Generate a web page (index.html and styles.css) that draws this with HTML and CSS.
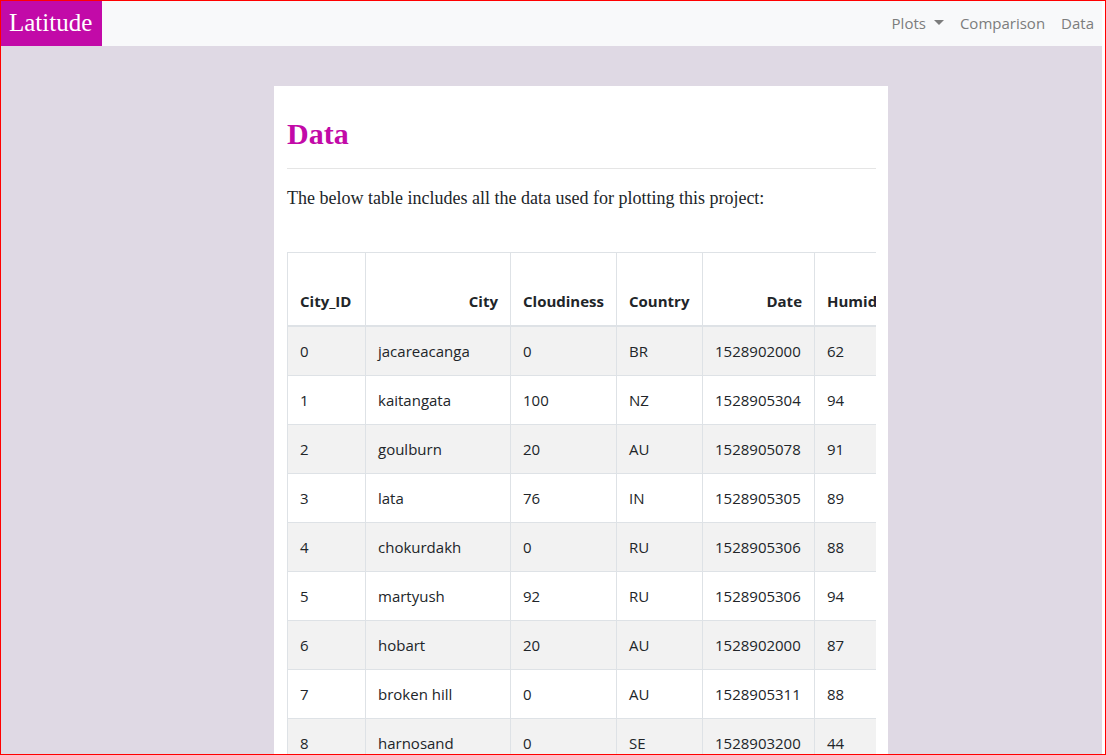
FILE: index.html
```html
<!DOCTYPE html>
<html lang="en">
<head>
<meta charset="utf-8">
<meta name="viewport" content="width=device-width, initial-scale=1">
<title>Latitude - Data</title>
<link rel="stylesheet" href="styles.css">
</head>
<body>
<div class="frame">
  <div class="page">
    <header class="navbar">
      <a class="brand" href="#">Latitude</a>
      <nav class="nav">
        <button class="nav-link nav-toggle" type="button" aria-haspopup="true">Plots<span class="caret"></span></button>
        <a class="nav-link" href="#">Comparison</a>
        <a class="nav-link" href="#">Data</a>
      </nav>
    </header>
    <main class="content">
      <section class="card">
        <h1 class="title">Data</h1>
        <hr class="rule">
        <p class="intro">The below table includes all the data used for plotting this project:</p>
        <div class="table-scroll">
          <table class="table">
            <colgroup><col class="col-id"><col class="col-city"><col class="col-cloud"><col class="col-country"><col class="col-date"><col class="col-humidity"></colgroup>
            <thead>
              <tr><th>City_ID</th><th class="right">City</th><th>Cloudiness</th><th>Country</th><th class="right">Date</th><th>Humidity</th></tr>
            </thead>
            <tbody>
              <tr><td>0</td><td>jacareacanga</td><td>0</td><td>BR</td><td>1528902000</td><td>62</td></tr>
              <tr><td>1</td><td>kaitangata</td><td>100</td><td>NZ</td><td>1528905304</td><td>94</td></tr>
              <tr><td>2</td><td>goulburn</td><td>20</td><td>AU</td><td>1528905078</td><td>91</td></tr>
              <tr><td>3</td><td>lata</td><td>76</td><td>IN</td><td>1528905305</td><td>89</td></tr>
              <tr><td>4</td><td>chokurdakh</td><td>0</td><td>RU</td><td>1528905306</td><td>88</td></tr>
              <tr><td>5</td><td>martyush</td><td>92</td><td>RU</td><td>1528905306</td><td>94</td></tr>
              <tr><td>6</td><td>hobart</td><td>20</td><td>AU</td><td>1528902000</td><td>87</td></tr>
              <tr><td>7</td><td>broken hill</td><td>0</td><td>AU</td><td>1528905311</td><td>88</td></tr>
              <tr><td>8</td><td>harnosand</td><td>0</td><td>SE</td><td>1528903200</td><td>44</td></tr>
            </tbody>
          </table>
        </div>
      </section>
    </main>
  </div>
</div>
</body>
</html>
```

FILE: styles.css
```css
* { box-sizing: border-box; }

body {
  margin: 0;
  background: #fff;
  color: #212529;
  font: 15px/24px "Open Sans", "Noto Sans", sans-serif;
}

.frame {
  height: 100vh;
  overflow: hidden;
  padding-right: 3px;
  border: 1px solid #f00;
}

.page {
  min-height: 100%;
  background: #dfd9e4;
}

.navbar {
  display: flex;
  justify-content: space-between;
  background: #f8f9fa;
}

.brand {
  padding: 4px 10px 5px 8px;
  background: #c20aa8;
  color: #fff;
  font: 25px/36px "Liberation Serif", serif;
  text-decoration: none;
}

.nav {
  display: flex;
  align-items: center;
  padding-bottom: 2px;
}

.nav-link {
  display: flex;
  align-items: center;
  padding: 0 8px;
  border: 0;
  background: none;
  color: #7c7d7d;
  font: inherit;
  text-decoration: none;
}

.caret {
  margin-left: 8px;
  border: 5px solid transparent;
  border-top-color: currentColor;
  border-bottom: 0;
}

.content {
  display: grid;
  grid-template-columns: 273fr 614fr 214fr;
  padding-top: 40px;
}

.card {
  grid-column: 2;
  min-width: 0;
  padding: 30px 12px 40px 13px;
  background: #fff;
}

.title {
  margin: 0;
  color: #c20aa8;
  font: bold 30px/36px "Liberation Serif", serif;
}

.rule {
  margin: 16px 0;
  border: 0;
  border-top: 1px solid #e5e5e5;
}

.intro {
  margin: 0 0 40px;
  font: 18px/27px "Liberation Serif", serif;
}

.table-scroll {
  overflow: hidden;
}

.table {
  width: 634px;
  table-layout: fixed;
  border-collapse: collapse;
}

.col-id { width: 78px; }
.col-city { width: 145px; }
.col-cloud { width: 106px; }
.col-country { width: 86px; }
.col-date { width: 112px; }
.col-humidity { width: 107px; }

.table th,
.table td {
  padding: 12px;
  border: 1px solid #dee2e6;
  text-align: left;
  white-space: nowrap;
}

.table th {
  padding-top: 36px;
  border-bottom-width: 2px;
}

.table .right { text-align: right; }

.table tbody tr:nth-child(odd) { background: #f2f2f2; }
```
